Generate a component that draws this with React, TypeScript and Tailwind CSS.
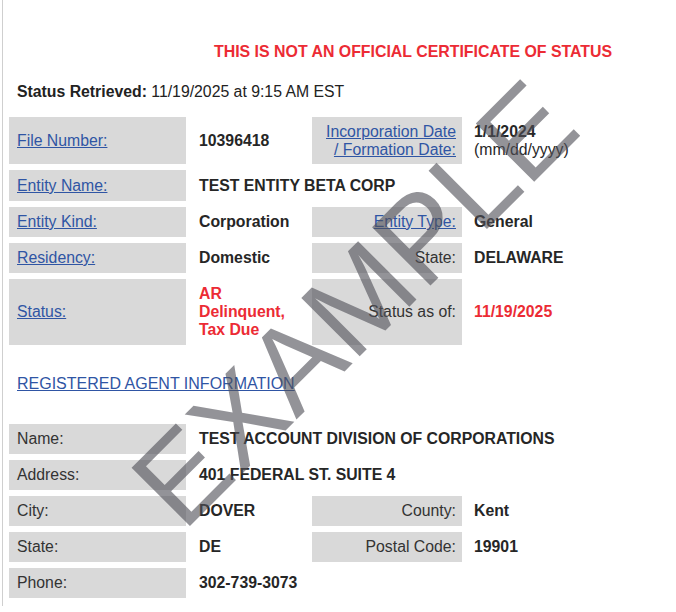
import React from "react";

const linkCls = "text-[#2f55a4] underline";

const Label = ({ children, link = false, right = false, className = "" }) => (
  <div
    className={`bg-[#d9d9d9] flex items-center ${
      right ? "justify-end text-right pr-[6px]" : "pl-[8px]"
    } ${className}`}
  >
    <span className={link ? linkCls : "text-[#333]"}>{children}</span>
  </div>
);

const Value = ({ children, className = "", pad = "pl-[7px]" }) => (
  <div className={`flex items-center font-bold text-[#262626] ${pad} ${className}`}>
    <div>{children}</div>
  </div>
);

export default function App() {
  return (
    <div
      className="relative w-[676px] h-[612px] bg-white overflow-hidden text-[15.8px] leading-[18px]"
      style={{ fontFamily: '"Liberation Sans", Arial, sans-serif' }}
    >
      <div className="ml-[2px] h-[606px] border-l border-[#cfcfcf] pl-[6px] pt-[43px]">
        <div className="pl-[205px] font-bold text-[15.9px] text-[#ec2b34]">
          THIS IS NOT AN OFFICIAL CERTIFICATE OF STATUS
        </div>

        <div className="mt-[22px] pl-[8px] text-[#222]">
          <span className="font-bold">Status Retrieved:</span> 11/19/2025 at 9:15 AM EST
        </div>

        {/* entity details */}
        <div className="mt-[16px] grid grid-cols-[177px_114px_150px_1fr] grid-rows-[47px_31px_30px_30px_66px] gap-[6px]">
          <Label link>File Number:</Label>
          <Value>10396418</Value>
          <Label link right>
            Incorporation Date
            <br />/ Formation Date:
          </Label>
          <Value pad="pl-[6px]">
            1/1/2024
            <br />
            <span className="font-normal">(mm/dd/yyyy)</span>
          </Value>

          <Label link>Entity Name:</Label>
          <Value className="col-span-3">TEST ENTITY BETA CORP</Value>

          <Label link>Entity Kind:</Label>
          <Value>Corporation</Value>
          <Label link right>Entity Type:</Label>
          <Value pad="pl-[6px]">General</Value>

          <Label link>Residency:</Label>
          <Value>Domestic</Value>
          <Label right>State:</Label>
          <Value pad="pl-[6px]">DELAWARE</Value>

          <Label link>Status:</Label>
          <Value>
            <span className="text-[#ec2b34]">
              AR
              <br />
              Delinquent,
              <br />
              Tax Due
            </span>
          </Value>
          <Label right>Status as of:</Label>
          <Value pad="pl-[6px]">
            <span className="text-[#ec2b34]">11/19/2025</span>
          </Value>
        </div>

        <div className="mt-[30px] pl-[8px] text-[16px]">
          <span className={linkCls}>REGISTERED AGENT INFORMATION</span>
        </div>

        {/* registered agent */}
        <div className="mt-[31px] grid grid-cols-[177px_114px_150px_1fr] auto-rows-[30px] gap-[6px]">
          <Label>Name:</Label>
          <Value className="col-span-3">TEST ACCOUNT DIVISION OF CORPORATIONS</Value>

          <Label>Address:</Label>
          <Value className="col-span-3">401 FEDERAL ST. SUITE 4</Value>

          <Label>City:</Label>
          <Value>DOVER</Value>
          <Label right>County:</Label>
          <Value pad="pl-[6px]">Kent</Value>

          <Label>State:</Label>
          <Value>DE</Value>
          <Label right>Postal Code:</Label>
          <Value pad="pl-[6px]">19901</Value>

          <Label>Phone:</Label>
          <Value className="col-span-3">302-739-3073</Value>
        </div>
      </div>

      {/* watermark */}
      <div className="pointer-events-none absolute left-[183px] top-[431px] origin-[0_102px] -rotate-45 whitespace-nowrap text-[120px] leading-none text-[rgba(80,80,88,0.62)]">
        EXAMPLE
      </div>
    </div>
  );
}
